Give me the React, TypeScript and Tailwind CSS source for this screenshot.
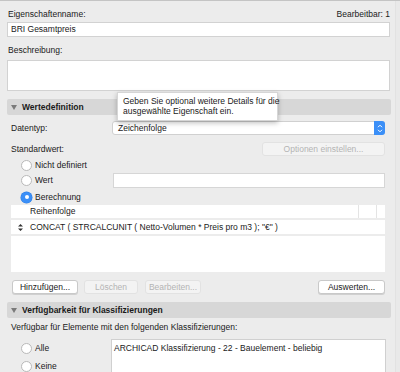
import React from 'react';

const font = { fontFamily: '"Liberation Sans", Arial, sans-serif' };

function Radio({ checked = false }: { checked?: boolean }) {
  return checked ? (
    <span className="flex h-[11px] w-[11px] shrink-0 items-center justify-center rounded-full bg-[#3b8ff7] shadow-[0_0_0_0.5px_#2b7be0]">
      <span className="h-[4px] w-[4px] rounded-full bg-white" />
    </span>
  ) : (
    <span className="h-[11px] w-[11px] shrink-0 rounded-full border border-[#b9b9b9] bg-white" />
  );
}

function SectionHeader({ title }: { title: string }) {
  return (
    <div className="flex h-[16px] items-center gap-[5px] rounded-[2px] bg-[#d7d7d7] pl-[4px]">
      <svg width="6" height="5" viewBox="0 0 6 5">
        <path d="M0 0 L6 0 L3 5 Z" fill="#7a7a7a" />
      </svg>
      <span className="text-[8.5px] font-bold text-[#1a1a1a]">{title}</span>
    </div>
  );
}

function Button({ label, disabled = false, className = '' }: { label: string; disabled?: boolean; className?: string }) {
  return (
    <div
      className={`flex h-[14px] items-center justify-center rounded-[3px] border text-[8.5px] ${
        disabled ? 'border-[#e2e2e2] bg-[#f3f3f3] text-[#b3b3b3]' : 'border-[#c9c9c9] bg-white text-[#1a1a1a] shadow-[0_1px_0_#d0d0d0]'
      } ${className}`}
    >
      {label}
    </div>
  );
}

export default function App() {
  return (
    <div className="relative h-[372px] w-[400px] overflow-hidden border-t border-[#c4c4c4] bg-[#ececec] text-[8.5px] text-[#1a1a1a]" style={font}>
      <div className="absolute right-0 top-0 h-full w-[5px] border-l border-[#e2e2e2] bg-[#e9e9e9]" />

      <div className="pl-[7px] pr-[10px] pt-[7px]">
        <div className="flex h-[12px] items-center justify-between pl-[1px]">
          <span>Eigenschaftenname:</span>
          <span>Bearbeitbar: 1</span>
        </div>
        <div className="mt-[2px] flex h-[15px] items-center border border-[#d2d2d2] bg-white pl-[3px]">
          BRI Gesamtpreis
        </div>
        <div className="mt-[7px] flex h-[12px] items-center pl-[1px]">Beschreibung:</div>
        <div className="mt-[4px] h-[31px] border border-[#d2d2d2] bg-white" />

        <div className="relative mt-[8px]">
          <div className="mr-[-1px]">
            <SectionHeader title="Wertedefinition" />
          </div>
          <div className="absolute left-[110px] top-[-7px] z-10 w-[161px] whitespace-nowrap border border-[#d6d6d6] bg-white px-[5px] pb-[4px] pt-[3px] text-[8.5px] leading-[10px] shadow-[0_2px_5px_rgba(0,0,0,0.25)]">
            Geben Sie optional weitere Details für die
            <br />
            ausgewählte Eigenschaft ein.
          </div>
        </div>

        <div className="pl-[4px] pr-[5px]">
          <div className="mt-[6px] flex h-[14px] items-center">
            <span className="w-[101px]">Datentyp:</span>
            <div className="flex h-[14px] flex-1 items-center rounded-[3px] border border-[#d0d0d0] bg-white pl-[5px]">
              <span className="flex-1">Zeichenfolge</span>
              <span className="-mr-px flex h-[14px] w-[11px] items-center justify-center rounded-r-[3px] bg-[#3b8ff7]">
                <svg width="6" height="9" viewBox="0 0 6 9">
                  <path d="M1 3.2 L3 1.2 L5 3.2 M1 5.8 L3 7.8 L5 5.8" fill="none" stroke="white" strokeWidth="1" />
                </svg>
              </span>
            </div>
          </div>

          <div className="mt-[7px] flex h-[14px] items-center justify-between">
            <span>Standardwert:</span>
            <Button label="Optionen einstellen..." disabled className="w-[123px]" />
          </div>

          <div className="mt-[2px] flex h-[14px] items-center gap-[3px] pl-[10px]">
            <Radio />
            <span>Nicht definiert</span>
          </div>
          <div className="mt-[1px] flex h-[15px] items-center">
            <div className="flex w-[102px] items-center gap-[3px] pl-[10px]">
              <Radio />
              <span>Wert</span>
            </div>
            <div className="h-[15px] flex-1 border border-[#d6d6d6] bg-white" />
          </div>
          <div className="mt-[2px] flex h-[14px] items-center gap-[3px] pl-[10px]">
            <Radio checked />
            <span>Berechnung</span>
          </div>

          <div className="mt-[1px] h-[67px] bg-white">
            <div className="flex h-[15px] items-center border-b-2 border-[#ececec]">
              <span className="flex-1 pl-[19px]">Reihenfolge</span>
              <span className="h-full w-[18px] border-l border-[#e4e4e4]" />
              <span className="h-full w-[9px] border-l border-[#e4e4e4]" />
            </div>
            <div className="flex h-[16px] items-center border-b-2 border-[#ececec]">
              <span className="flex w-[19px] justify-center">
                <svg width="5" height="7" viewBox="0 0 5 7">
                  <path d="M2.5 0 L5 2.6 L0 2.6 Z M2.5 7 L5 4.4 L0 4.4 Z" fill="#333" />
                </svg>
              </span>
              <span>CONCAT ( STRCALCUNIT ( Netto-Volumen * Preis pro m3 ); "€" )</span>
            </div>
          </div>

          <div className="mt-[8px] flex items-center">
            <Button label="Hinzufügen..." className="ml-[1px] w-[66px]" />
            <Button label="Löschen" disabled className="ml-[6px] w-[54px]" />
            <Button label="Bearbeiten..." disabled className="ml-[7px] w-[56px]" />
            <div className="flex-1" />
            <Button label="Auswerten..." className="w-[67px]" />
          </div>
        </div>

        <div className="mr-[-1px] mt-[8px]">
          <SectionHeader title="Verfügbarkeit für Klassifizierungen" />
        </div>

        <div className="pl-[4px] pr-[4px]">
          <div className="mt-[3px] flex h-[12px] items-center">
            Verfügbar für Elemente mit den folgenden Klassifizierungen:
          </div>
          <div className="mt-[6px] flex">
            <div className="w-[100px] pl-[10px] pt-[3px]">
              <div className="flex h-[12px] items-center gap-[3px]">
                <Radio />
                <span>Alle</span>
              </div>
              <div className="mt-[6px] flex h-[12px] items-center gap-[3px]">
                <Radio />
                <span>Keine</span>
              </div>
            </div>
            <div className="h-[40px] flex-1 border border-[#d0d0d0] bg-white pl-[2px] pt-[2px]">
              ARCHICAD Klassifizierung - 22 - Bauelement - beliebig
            </div>
          </div>
        </div>
      </div>
    </div>
  );
}
